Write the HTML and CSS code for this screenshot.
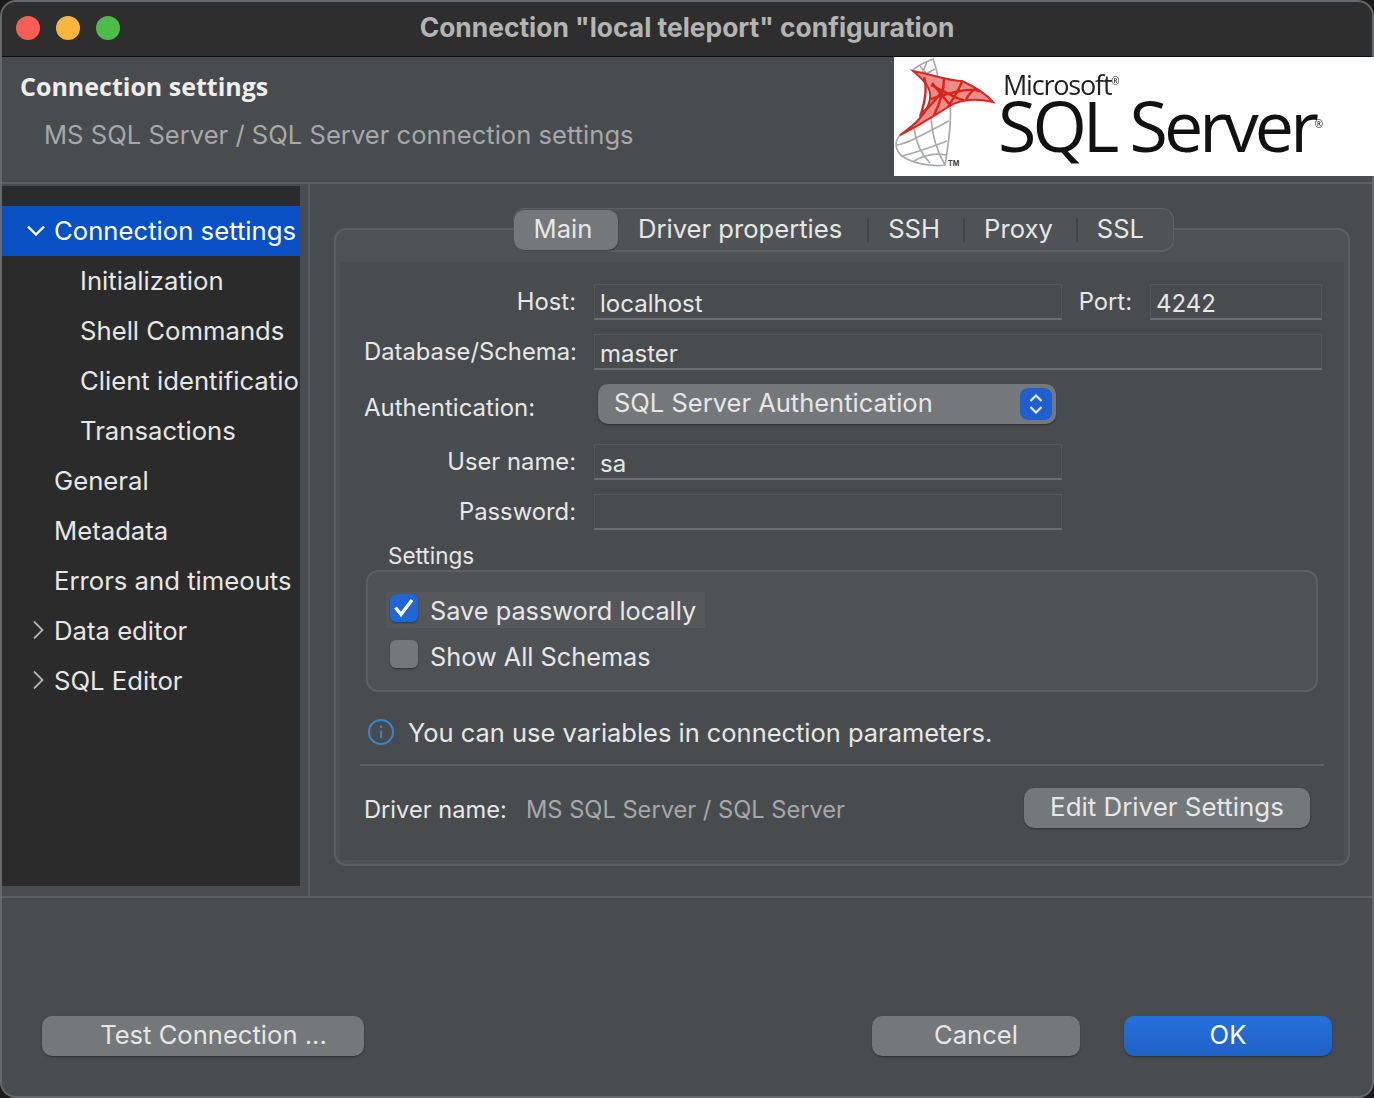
FILE: index.html
```html
<!DOCTYPE html>
<html lang="en">
<head>
    <meta charset="UTF-8">
    <title>Connection "local teleport" configuration</title>
    <link rel="stylesheet" href="styles.css">
</head>
<body>
<div class="window">

    <header class="titlebar">
        <div class="lights">
            <span class="light red"></span>
            <span class="light yellow"></span>
            <span class="light green"></span>
        </div>
        <div class="title">Connection "local teleport" configuration</div>
    </header>

    <section class="banner">
        <div class="banner-text">
            <h1>Connection settings</h1>
            <p>MS SQL Server / SQL Server connection settings</p>
        </div>
        <div class="logo">
            <svg class="logo-mark" width="106" height="119" viewBox="0 0 106 119">
                <!-- grey part of the spiral -->
                <g fill="none" stroke="#a9abad" stroke-width="1.7">
                    <path d="M19 13C24 8 32 5 39 2C42 10 44 18 44 24"/>
                    <path d="M26 9C30 14 34 18 37 24M33 5L28 17M41 12L30 18"/>
                    <path d="M6 78C0 85 1 93 8 99C18 106 36 110 51 108C54 90 58 65 56 48"/>
                    <path d="M37 60C38 80 44 96 51 108M20 72C22 85 28 98 36 106"/>
                    <path d="M3 88C15 86 28 78 55 64M8 99C20 96 38 90 53 84M20 104C30 98 42 96 52 98"/>
                </g>
                <!-- red part -->
                <path d="M19 14C40 18 56 24 68 24C81 30 93 38 99 45C81 41 66 42 54 50C41 58 26 68 6 78C21 68 34 55 36 42C38 30 28 22 19 14Z" fill="#ee8d88" stroke="#d32a25" stroke-width="2"/>
                <g fill="none" stroke="#d9231e" stroke-width="2.4">
                    <path d="M36 42C50 38 72 30 86 34M37 28C50 34 66 44 70 43M30 20C34 32 30 48 26 60"/>
                    <path d="M50 21C50 32 46 46 40 58M68 24C66 32 60 40 54 50M82 31C78 34 74 38 72 43"/>
                    <path d="M28 56C36 50 46 38 50 30M38 26L56 48"/>
                </g>
            </svg>
            <div class="logo-text">
                <span class="logo-ms">Microsoft<sup>®</sup></span>
                <span class="logo-sql">SQL Server<sup>®</sup></span>
            </div>
            <span class="logo-tm">TM</span>
        </div>
    </section>

    <div class="middle">
        <nav class="tree">
            <div class="tree-item selected">
                <svg class="arrow arrow-open" width="18" height="18" viewBox="0 0 18 18"><path d="M1 4.5L9 12.5L17 4.5" fill="none" stroke="#fff" stroke-width="2.4"/></svg>
                Connection settings
            </div>
            <div class="tree-item child">Initialization</div>
            <div class="tree-item child">Shell Commands</div>
            <div class="tree-item child">Client identification</div>
            <div class="tree-item child">Transactions</div>
            <div class="tree-item">General</div>
            <div class="tree-item">Metadata</div>
            <div class="tree-item">Errors and timeouts</div>
            <div class="tree-item">
                <svg class="arrow" width="18" height="18" viewBox="0 0 18 18"><path d="M6 0.5L14.5 9L6 17.5" fill="none" stroke="#b5b6b7" stroke-width="1.8"/></svg>
                Data editor
            </div>
            <div class="tree-item">
                <svg class="arrow" width="18" height="18" viewBox="0 0 18 18"><path d="M6 0.5L14.5 9L6 17.5" fill="none" stroke="#b5b6b7" stroke-width="1.8"/></svg>
                SQL Editor
            </div>
        </nav>

        <main class="content">
            <div class="tabs">
                <span class="tab active">Main</span>
                <span class="tab tab-driver">Driver properties</span>
                <span class="tab-sep"></span>
                <span class="tab">SSH</span>
                <span class="tab-sep"></span>
                <span class="tab">Proxy</span>
                <span class="tab-sep"></span>
                <span class="tab">SSL</span>
            </div>

            <div class="panel">
                <div class="panel-inner">
                    <div class="form">
                        <label class="lbl">Host:</label>
                        <div class="field">localhost</div>
                        <label class="lbl">Port:</label>
                        <div class="field">4242</div>

                        <label class="lbl">Database/Schema:</label>
                        <div class="field span3">master</div>

                        <label class="lbl lbl-left">Authentication:</label>
                        <div class="combo-cell span3">
                            <div class="combo">
                                <span class="combo-text">SQL Server Authentication</span>
                                <span class="combo-btn">
                                    <svg width="16" height="26" viewBox="0 0 16 26">
                                        <path d="M2.5 10L8 4.5L13.5 10M2.5 16L8 21.5L13.5 16" fill="none" stroke="#e6ecf7" stroke-width="2.2"/>
                                    </svg>
                                </span>
                            </div>
                        </div>

                        <label class="lbl">User name:</label>
                        <div class="field">sa</div>
                        <div class="span2"></div>

                        <label class="lbl">Password:</label>
                        <div class="field"></div>
                        <div class="span2"></div>
                    </div>

                    <div class="group-title">Settings</div>
                    <div class="group">
                        <div class="check-row focused">
                            <span class="check on">
                                <svg width="24" height="24" viewBox="0 0 24 24"><path d="M3.5 11.5L9 18.5L20 4" fill="none" stroke="#fff" stroke-width="3.4"/></svg>
                            </span>
                            Save password locally
                        </div>
                        <div class="check-row">
                            <span class="check"></span>
                            Show All Schemas
                        </div>
                    </div>

                    <div class="info">
                        <svg width="28" height="28" viewBox="0 0 28 28">
                            <circle cx="14" cy="14" r="12" fill="none" stroke="#3b86c8" stroke-width="2"/>
                            <path d="M14 12.5V20" stroke="#3b86c8" stroke-width="1.8"/>
                            <circle cx="14" cy="8.8" r="1.2" fill="#3b86c8"/>
                        </svg>
                        You can use variables in connection parameters.
                    </div>

                    <div class="driver">
                        <span class="driver-lbl">Driver name:</span>
                        <span class="driver-name">MS SQL Server / SQL Server</span>
                        <button class="btn btn-edit">Edit Driver Settings</button>
                    </div>
                </div>
            </div>
        </main>
    </div>

    <footer class="bottom">
        <button class="btn btn-test">Test Connection ...</button>
        <button class="btn btn-cancel">Cancel</button>
        <button class="btn btn-ok">OK</button>
    </footer>

</div>
</body>
</html>
```

FILE: styles.css
```css
* {
    margin: 0;
    padding: 0;
    box-sizing: border-box;
}

html, body {
    width: 1374px;
    height: 1098px;
    overflow: hidden;
    background-color: #1b1b1b;
}

body {
    font-family: 'Inter', 'Noto Sans', sans-serif;
    font-size: 25.6px;
    color: #e6e7e7;
}

.window {
    width: 1374px;
    height: 1098px;
    display: flex;
    flex-direction: column;
    background-color: #494c4f;
    border-radius: 16px;
    overflow: hidden;
    position: relative;
}

/* borde claro de la ventana */
.window:after {
    content: '';
    position: absolute;
    inset: 0;
    border: 2px solid #66696b;
    border-radius: 16px;
    pointer-events: none;
}

.titlebar {
    height: 57px;
    flex-shrink: 0;
    display: flex;
    align-items: center;
    position: relative;
    background-color: #2e2e2e;
    border-bottom: 1px solid #0d0d0d;
}

.lights {
    display: flex;
    gap: 16px;
    padding-left: 16px;
}

.light {
    width: 24px;
    height: 24px;
    border-radius: 50%;
}

.red { background-color: #f65e55; }
.yellow { background-color: #fbb53f; }
.green { background-color: #4bbd48; }

.title {
    position: absolute;
    left: 0;
    right: 0;
    top: 11px;
    text-align: center;
    font-size: 26.4px;
    font-weight: 700;
    color: #b4b4b4;
}

.banner {
    height: 127px;
    flex-shrink: 0;
    display: flex;
    justify-content: space-between;
    align-items: flex-start;
    background-color: #494c4f;
    border-bottom: 2px solid #5d6063;
}

.banner-text {
    padding: 12px 0 0 20px;
}

.banner h1 {
    font-family: 'Open Sans', sans-serif;
    font-size: 25px;
    font-weight: 700;
    line-height: 34px;
    color: #eeeeee;
}

.banner p {
    margin: 15px 0 0 24px;
    line-height: 34px;
    color: #a6a8a9;
}

.logo {
    width: 480px;
    height: 119px;
    display: flex;
    position: relative;
    z-index: 2;
    overflow: hidden;
    background-color: #fff;
}

.logo-mark {
    flex-shrink: 0;
    filter: blur(0.7px);
}

.logo-text {
    flex-shrink: 0;
    display: flex;
    flex-direction: column;
    padding: 11px 0 0 0;
    color: #111;
    font-family: 'Open Sans', sans-serif;
    filter: blur(0.4px);
}

.logo-ms {
    font-size: 27px;
    line-height: 34px;
    letter-spacing: -1.2px;
    color: #222;
    padding-left: 3px;
}

.logo-ms sup, .logo-sql sup {
    font-size: 10px;
    line-height: 0;
}

.logo-sql {
    font-size: 70px;
    line-height: 46px;
    letter-spacing: -4px;
    margin-left: -2px;
    white-space: nowrap;
}

.logo-tm {
    position: absolute;
    left: 54px;
    top: 102px;
    font-size: 7px;
    font-weight: 700;
    color: #444;
}

.middle {
    height: 714px;
    flex-shrink: 0;
    display: flex;
    border-bottom: 2px solid #5d6063;
}

.tree {
    width: 298px;
    height: 700px;
    flex-shrink: 0;
    margin: 2px 0 0 2px;
    padding-top: 20px;
    background-color: #2b2b2b;
    font-size: 25.7px;
    overflow: hidden;
}

.tree-item {
    height: 50px;
    display: flex;
    align-items: center;
    padding: 0 0 2px 52px;
    position: relative;
    white-space: nowrap;
}

.tree-item.child {
    padding-left: 78px;
}

.tree-item.selected {
    background-color: #0850c4;
    color: #fff;
}

.arrow {
    position: absolute;
    left: 26px;
    top: 15px;
}

.arrow-open {
    left: 25px;
    top: 16px;
}

.content {
    flex: 1;
    min-width: 0;
    margin-left: 8px;
    padding: 24px 24px 0 24px;
    border-left: 2px solid #5d6063;
    display: flex;
    flex-direction: column;
}

.tabs {
    align-self: flex-start;
    height: 44px;
    margin: 0 0 -24px 179px;
    padding-right: 6px;
    position: relative;
    z-index: 1;
    display: flex;
    align-items: center;
    background-color: #505356;
    border: 1px solid #5f6265;
    border-bottom: 2px solid #5f6265;
    border-radius: 12px;
}

.tab {
    padding: 0 23px 2px 19px;
    line-height: 38px;
}

.tab-driver {
    padding: 0 25px 2px 20px;
}

.tab-sep {
    width: 2px;
    height: 24px;
    background-color: #434649;
}

.tab.active {
    height: 40px;
    width: 104px;
    padding: 0 6px 0 0;
    text-align: center;
    background-color: #75787a;
    border-radius: 10px;
    box-shadow: 0 1px 2px rgba(0, 0, 0, 0.4);
}

.panel {
    height: 638px;
    background-color: #4f5255;
    border: 2px solid #5d6063;
    border-radius: 12px;
    padding: 32px 4px 4px 4px;
}

.panel-inner {
    height: 100%;
    background-color: #494c4f;
    padding: 22px 22px 0 24px;
}

.form {
    display: grid;
    grid-template-columns: 230px 468px 88px 172px;
    grid-template-rows: 36px 36px 46px 36px 36px;
    row-gap: 14px;
    font-size: 24px;
}

.lbl {
    font-size: 23.8px;
    text-align: right;
    padding-right: 18px;
    line-height: 36px;
}

.lbl-left {
    font-size: 24px;
    text-align: left;
    padding-top: 6px;
}

.field {
    height: 36px;
    padding: 2px 0 0 5px;
    line-height: 34px;
    border: 1px solid #55585b;
    border-bottom: 2px solid #6c6f71;
}

.span3 { grid-column: span 3; }
.span2 { grid-column: span 2; }

.combo-cell {
    padding-left: 4px;
}

.combo {
    width: 458px;
    height: 40px;
    display: flex;
    justify-content: space-between;
    align-items: center;
    padding: 0 4px 0 16px;
    font-size: 25.5px;
    background-color: #75787a;
    border-radius: 10px;
    box-shadow: 0 1px 2px rgba(0, 0, 0, 0.4);
}

.combo-text {
    padding-bottom: 3px;
}

.combo-btn {
    width: 32px;
    height: 32px;
    display: flex;
    align-items: center;
    justify-content: center;
    background-color: #1f5fd0;
    border-radius: 8px;
}

.group-title {
    font-size: 22.5px;
    line-height: 28px;
    margin: 12px 0 0 24px;
}

.group {
    width: 952px;
    height: 122px;
    margin: 0 0 0 2px;
    padding: 20px 0 0 18px;
    background-color: #4f5255;
    border: 2px solid #5d6063;
    border-radius: 12px;
}

.check-row {
    display: flex;
    align-items: center;
    gap: 12px;
    width: fit-content;
    height: 36px;
    padding: 0 9px 0 4px;
    font-size: 25.3px;
}

.check-row + .check-row {
    margin-top: 10px;
}

.check-row.focused {
    background-color: #55585b;
}

.check {
    width: 28px;
    height: 28px;
    display: flex;
    align-items: center;
    justify-content: center;
    border-radius: 6px;
    background-color: #75787a;
    box-shadow: 0 1px 2px rgba(0, 0, 0, 0.4);
    margin-top: -4px;
}

.check.on {
    background-color: #1f66d6;
}

.info {
    display: flex;
    align-items: center;
    gap: 13px;
    height: 36px;
    margin: 22px 0 0 3px;
    font-size: 25.45px;
}

.driver {
    width: 964px;
    height: 90px;
    margin: 14px 0 0 -4px;
    padding: 0 14px 0 4px;
    display: flex;
    align-items: center;
    border-top: 2px solid #5d6063;
    font-size: 23.65px;
}

.driver-lbl {
    width: 162px;
    padding-bottom: 2px;
}

.driver-name {
    flex: 1;
    padding-bottom: 2px;
    color: #a6a8a9;
}

.btn {
    height: 40px;
    padding-bottom: 3px;
    border: none;
    border-radius: 10px;
    font-family: 'Inter', 'Noto Sans', sans-serif;
    font-size: 25.6px;
    color: #e6e7e7;
    background-color: #75787a;
    box-shadow: 0 1px 2px rgba(0, 0, 0, 0.4);
}

.btn-edit {
    width: 286px;
    margin-top: -4px;
    font-size: 25.9px;
}

.bottom {
    flex: 1;
    display: flex;
    align-items: flex-end;
    padding: 0 42px 42px 42px;
}

.btn-test {
    width: 322px;
    padding-left: 21px;
}

.btn-cancel {
    width: 208px;
    margin-left: auto;
}

.btn-ok {
    width: 208px;
    margin-left: 44px;
    color: #fff;
    background: linear-gradient(#2570dc, #1f61c4);
}
```
